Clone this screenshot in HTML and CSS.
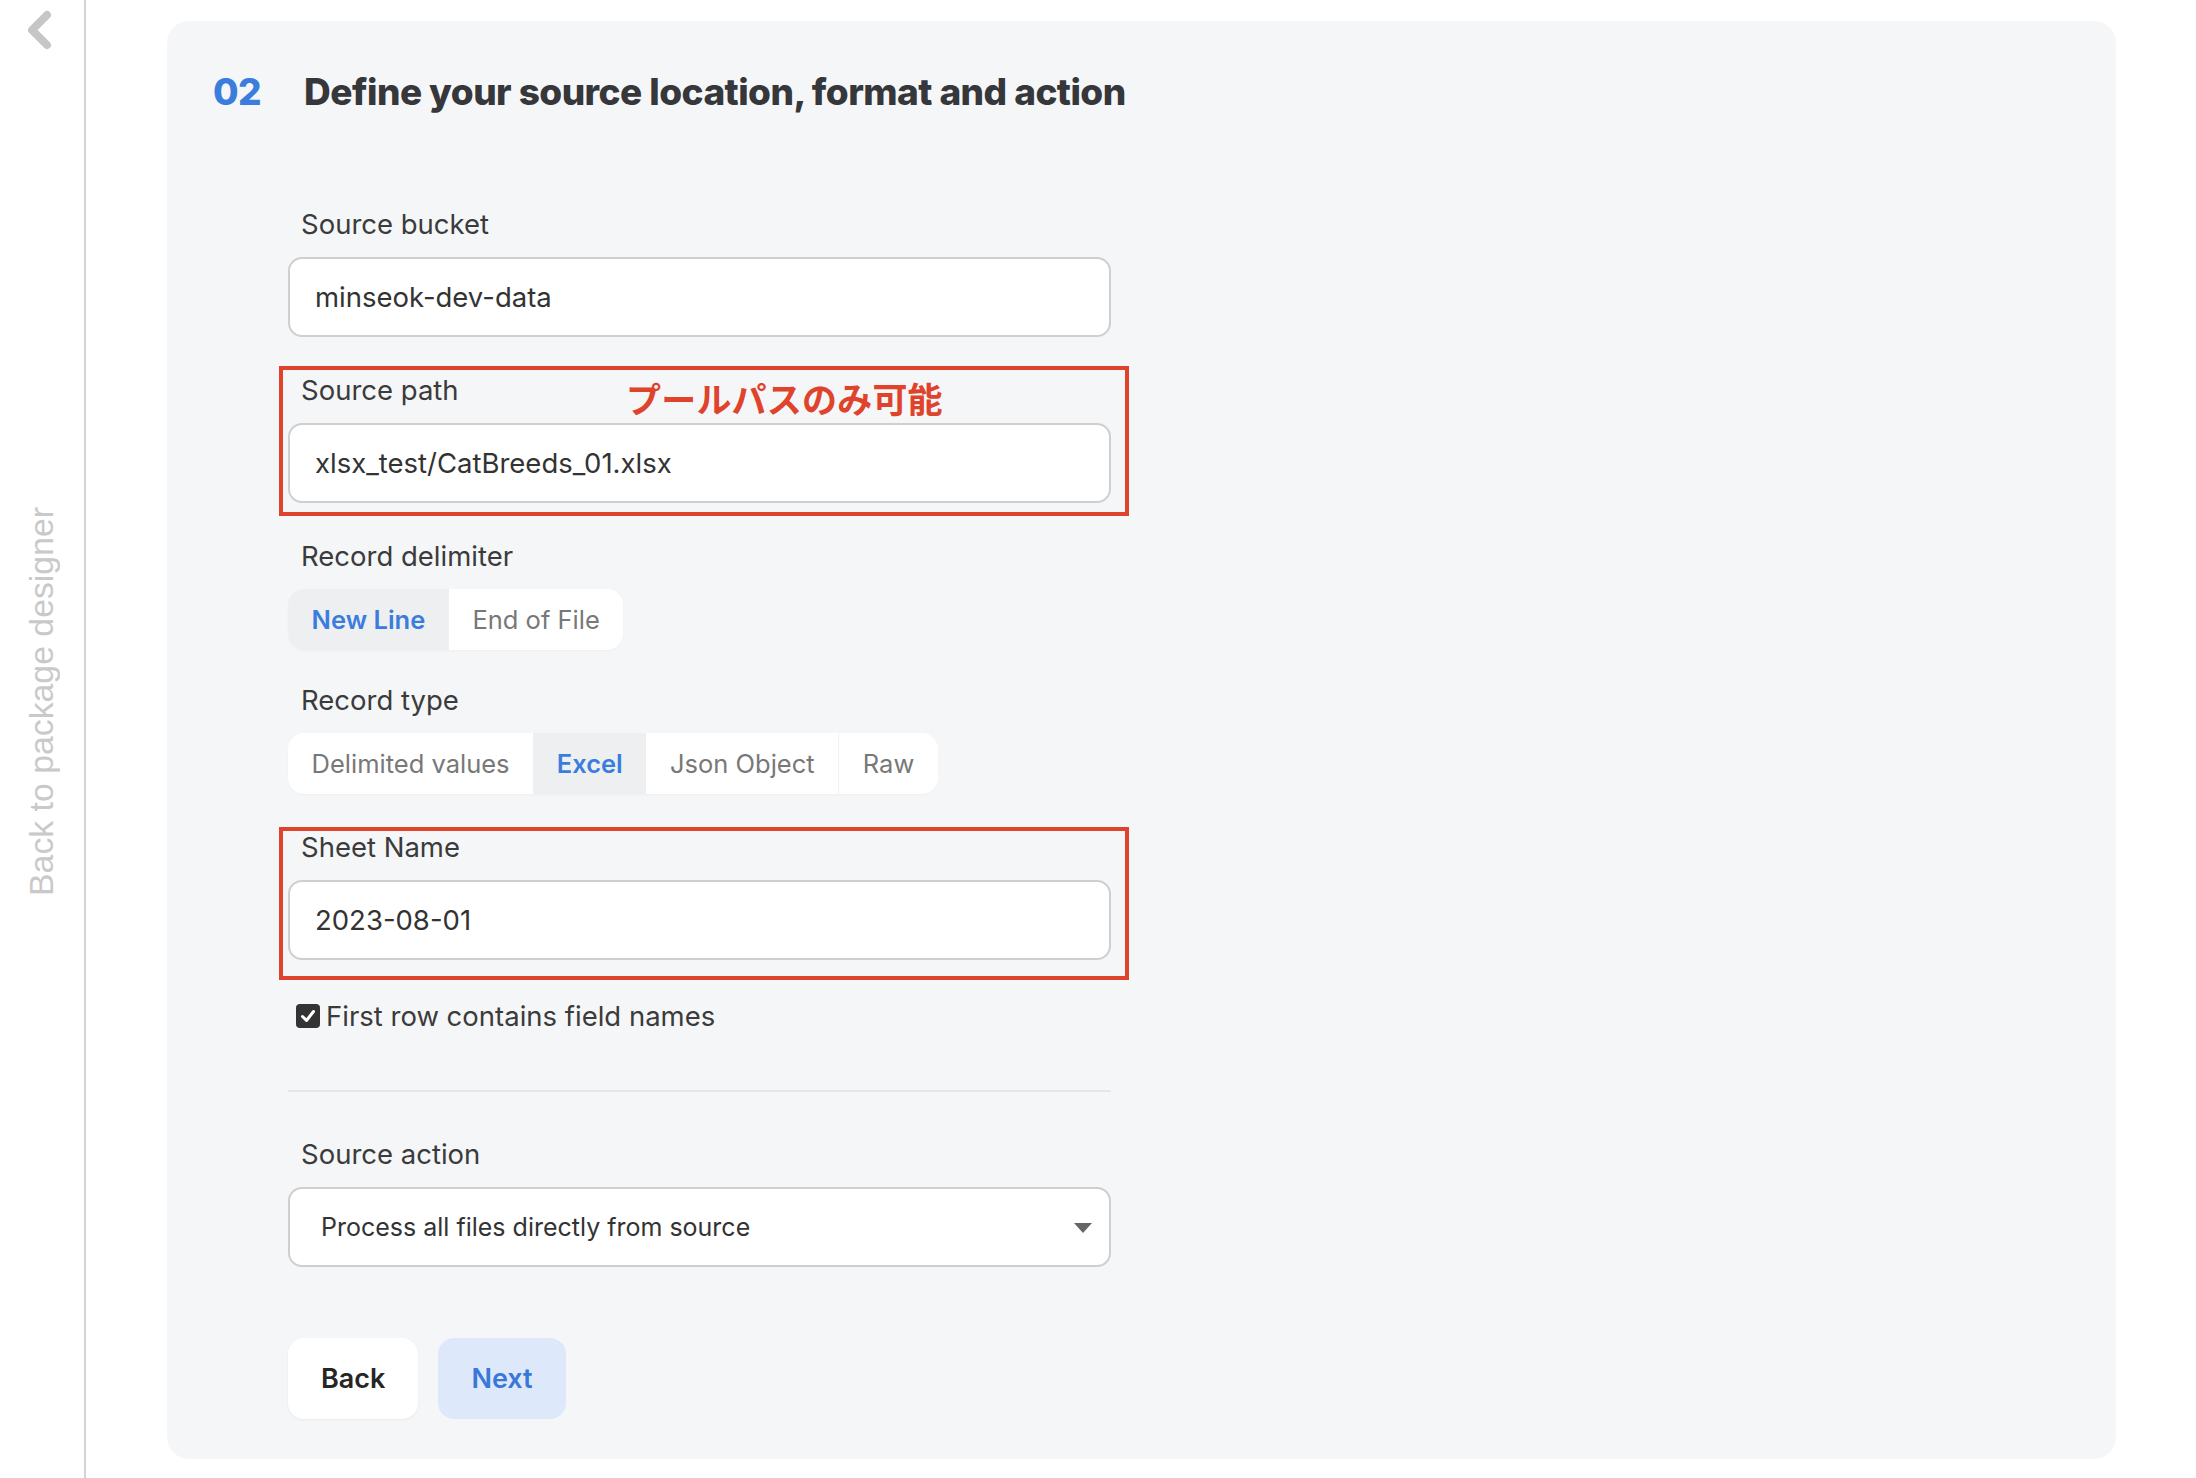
FILE: index.html
```html
<!DOCTYPE html>
<html lang="en">
<head>
<meta charset="utf-8">
<title>Define your source location, format and action</title>
<link rel="stylesheet" href="styles.css">
</head>
<body>
<aside class="sidebar">
  <svg class="back-chevron" width="28" height="40" viewBox="0 0 28 40"><path d="M22 5 L7 20 L22 35" fill="none" stroke="#c6c6c6" stroke-width="8" stroke-linecap="round" stroke-linejoin="round"/></svg>
  <div class="back-label">Back to package designer</div>
</aside>
<main class="main">
  <section class="card">
    <h1 class="step-title"><span class="step-num">02</span><span class="step-text">Define your source location, format and action</span></h1>
    <div class="form">
      <div class="field">
        <div class="label">Source bucket</div>
        <div class="input">minseok-dev-data</div>
      </div>
      <div class="field">
        <div class="label">Source path</div>
        <div class="input">xlsx_test/CatBreeds_01.xlsx</div>
        <div class="mark mark-path"></div>
        <div class="note">プールパスのみ可能</div>
      </div>
      <div class="field field-tight">
        <div class="label">Record delimiter</div>
        <div class="segmented">
          <span class="seg active">New Line</span>
          <span class="seg">End of File</span>
        </div>
      </div>
      <div class="field">
        <div class="label">Record type</div>
        <div class="segmented">
          <span class="seg">Delimited values</span>
          <span class="seg active">Excel</span>
          <span class="seg">Json Object</span>
          <span class="seg sep">Raw</span>
        </div>
      </div>
      <div class="field">
        <div class="label">Sheet Name</div>
        <div class="input">2023-08-01</div>
        <div class="mark mark-sheet"></div>
      </div>
      <label class="check-row">
        <span class="checkbox"><svg width="18" height="18" viewBox="0 0 18 18"><path d="M3.5 9.5 L7.5 13.5 L14.5 4.5" fill="none" stroke="#fff" stroke-width="3" stroke-linecap="round" stroke-linejoin="round"/></svg></span>
        <span class="check-text">First row contains field names</span>
      </label>
      <hr class="divider">
      <div class="field">
        <div class="label">Source action</div>
        <div class="select">
          <span class="select-text">Process all files directly from source</span>
          <svg class="caret" width="18" height="10" viewBox="0 0 18 10"><path d="M0 0 H18 L9 10 Z" fill="#666"/></svg>
        </div>
      </div>
      <div class="actions">
        <button class="btn btn-back">Back</button>
        <button class="btn btn-next">Next</button>
      </div>
    </div>
  </section>
</main>
</body>
</html>
```

FILE: styles.css
```css
* { box-sizing: border-box; }
html, body { margin: 0; padding: 0; }
body {
  width: 2196px;
  height: 1478px;
  display: flex;
  background: #ffffff;
  font-family: Inter, "Noto Sans", sans-serif;
  color: #3a3a3a;
  overflow: hidden;
}
.sidebar {
  width: 86px;
  flex: 0 0 86px;
  border-right: 2px solid #d4d4d4;
  display: flex;
  flex-direction: column;
  align-items: flex-start;
  padding-top: 10px;
  padding-left: 25px;
}
.back-chevron { display: block; }
.back-label {
  margin-top: 457px;
  writing-mode: vertical-rl;
  transform: rotate(180deg);
  font-family: "Liberation Sans", Arial, sans-serif;
  font-size: 33.8px;
  line-height: 33px;
  color: #c9c9c9;
  white-space: nowrap;
}
.main {
  flex: 1;
  padding: 21px 80px 19px 81px;
  display: flex;
}
.card {
  flex: 1;
  background: #f5f6f8;
  border-radius: 22px;
  padding: 46px 46px 40px 46px;
}
.step-title {
  margin: 0;
  display: flex;
  align-items: center;
  gap: 43px;
  height: 48px;
  font-size: 37px;
  font-weight: 800;
  letter-spacing: -0.55px;
}
.step-num { color: #3b7ddd; }
.step-text { color: #36373a; }
.form {
  width: 823px;
  margin-left: 75px;
  margin-top: 92px;
}
.field {
  position: relative;
  margin-bottom: 36px;
}
.field-tight { margin-bottom: 33px; }
.label {
  font-size: 27.5px;
  line-height: 34px;
  padding-left: 13px;
  margin-bottom: 16px;
  color: #3b3b3b;
}
.input, .select {
  height: 80px;
  background: #fff;
  border: 2px solid #cfcfcf;
  border-radius: 14px;
  padding: 0 25px;
  display: flex;
  align-items: center;
  font-size: 27.5px;
  color: #333;
}
.select { padding: 0 17px 0 31px; justify-content: space-between; font-size: 25px; }
.caret { margin-top: 2px; }
.segmented {
  display: flex;
  width: fit-content;
  height: 61px;
  background: #fff;
  border-radius: 16px;
  overflow: hidden;
  box-shadow: 0 1px 2px rgba(0,0,0,0.03);
}
.seg {
  display: flex;
  align-items: center;
  padding: 0 23.6px;
  font-size: 25.5px;
  color: #787878;
}
.seg.active {
  background: #eeeff1;
  color: #3b7ddd;
  font-weight: 600;
}
.seg.sep { border-left: 1px solid #f1f1f1; }
.mark {
  position: absolute;
  border: 4px solid #e0432b;
  pointer-events: none;
}
.mark-path { left: -9px; right: -18px; top: -7px; bottom: -13px; }
.mark-sheet { left: -9px; right: -18px; top: -3px; bottom: -20px; }
.note {
  position: absolute;
  left: 338px;
  top: 5px;
  font-family: "Noto Sans CJK JP", sans-serif;
  font-weight: 700;
  font-size: 35px;
  line-height: 40px;
  color: #e0432b;
  letter-spacing: 0.2px;
}
.check-row {
  display: flex;
  align-items: center;
  gap: 6px;
  padding-left: 8px;
  margin-top: 39px;
  height: 34px;
  font-size: 27.5px;
  color: #3b3b3b;
}
.checkbox {
  width: 24px;
  height: 24px;
  border-radius: 4px;
  background: #333;
  display: flex;
  align-items: center;
  justify-content: center;
}
.divider {
  border: 0;
  height: 2px;
  background: #e5e6e8;
  margin: 57px 0 45px 0;
}
.actions {
  display: flex;
  gap: 20px;
  margin-top: 71px;
}
.btn {
  height: 81px;
  border: 0;
  border-radius: 16px;
  font-family: Inter, sans-serif;
  font-size: 27px;
  font-weight: 600;
  padding: 0 33px;
}
.btn-back { background: #fff; color: #262626; box-shadow: 0 1px 3px rgba(0,0,0,0.05); }
.btn-next { background: #dde9fb; color: #3a78d8; }
```
